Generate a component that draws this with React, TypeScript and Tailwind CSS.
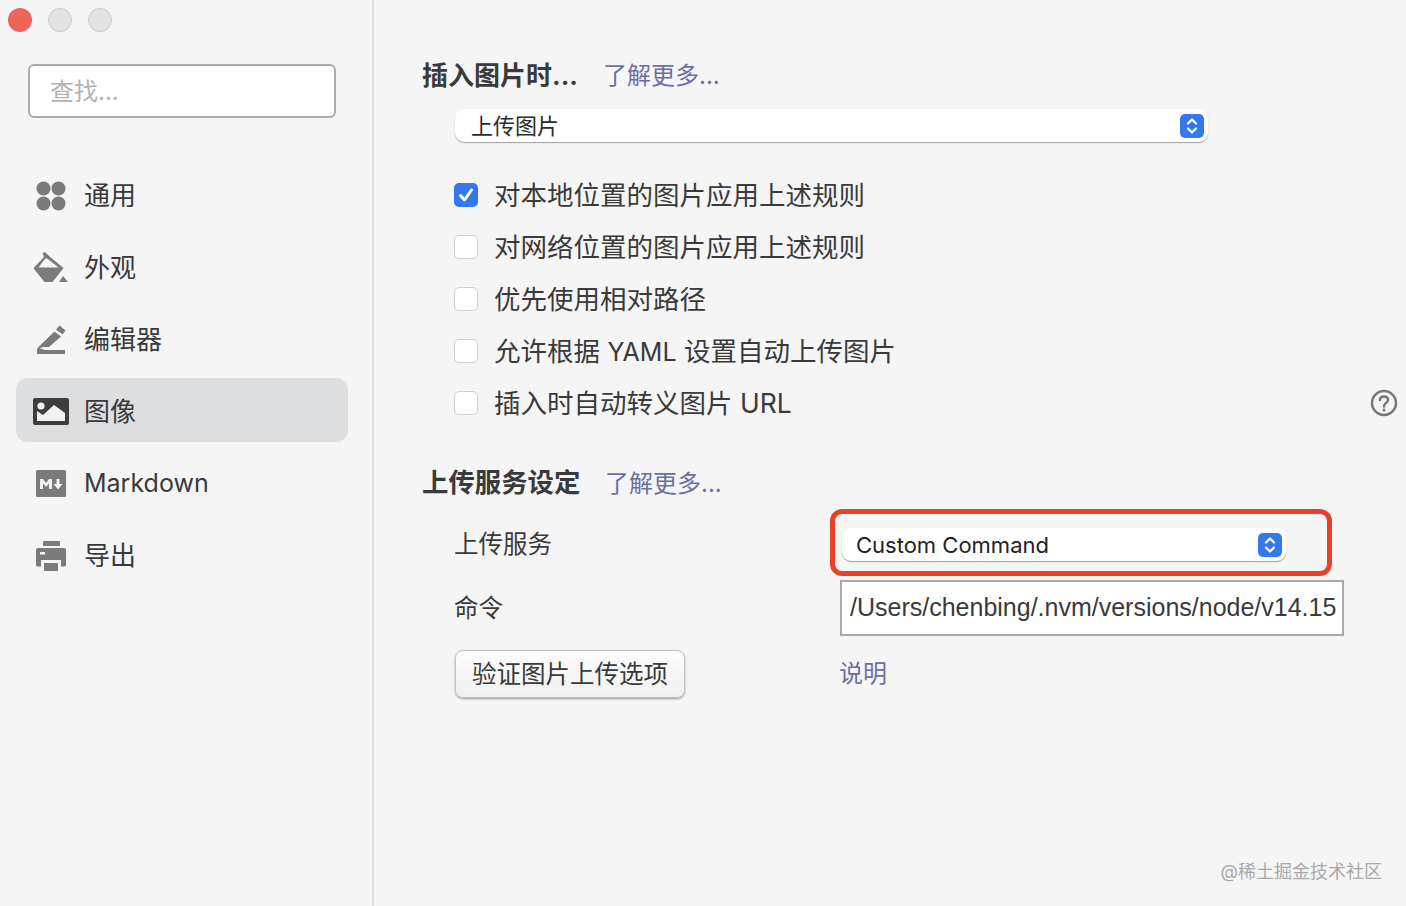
import type { ReactNode } from "react";

const fontStack = "font-['Inter','Noto_Sans_CJK_SC',sans-serif]";

function GeneralIcon() {
  return (
    <svg width="32" height="32" viewBox="0 0 32 32" fill="#7b7b7b">
      <circle cx="8.5" cy="8.5" r="7" />
      <circle cx="23.5" cy="8.5" r="7" />
      <circle cx="8.5" cy="23.5" r="7" />
      <circle cx="23.5" cy="23.5" r="7" />
    </svg>
  );
}

function BucketIcon() {
  return (
    <svg width="36" height="32" viewBox="0 0 36 32" fill="#7b7b7b">
      <path d="M9.500 1 L12 0 L16 4 L30.500 16 L19.500 30 H11.500 L1 17 Q0.500 16 1.500 15 L11 5 Z M11 8 L5.500 15.500 H25.500 L13.500 6 Z" fillRule="evenodd" />
      <path d="M30 24 L35 30 H26 Z" />
    </svg>
  );
}

function PencilIcon() {
  return (
    <svg width="32" height="32" viewBox="0 0 32 32" fill="#7b7b7b">
      <path d="M24.500 1.500 L30.500 6.500 L27.500 10.500 L21 5.500 Z" />
      <path d="M19.500 7.500 L26 12.500 L14 23 H8 L2.500 26 V24 Z" />
      <path d="M2 25 L9 25 L8 26 H30 V30 H2 Z" />
    </svg>
  );
}

function ImageIcon() {
  return (
    <svg width="36" height="28" viewBox="0 0 36 28">
      <rect x="0" y="0" width="36" height="27" rx="2" fill="#3d3d3d" />
      <circle cx="8" cy="8" r="3.600" fill="#f2f2f2" />
      <path d="M4 23 V13 L10 17 L21 7 L32 15 V23 Z" fill="#f2f2f2" />
    </svg>
  );
}

function MarkdownIcon() {
  return (
    <svg width="30" height="28" viewBox="0 0 30 28">
      <rect x="0" y="0" width="30" height="27" rx="1.500" fill="#7b7b7b" />
      <path d="M4 19 V9 H7 L10 13 L13 9 H16 V19 H13 V13.500 L10 17 L7 13.500 V19 Z" fill="#f2f2f2" />
      <path d="M20.500 9 H23.500 V14 H26.500 L22 19.500 L17.500 14 H20.500 Z" fill="#f2f2f2" />
    </svg>
  );
}

function PrinterIcon() {
  return (
    <svg width="30" height="30" viewBox="0 0 30 30" fill="#7b7b7b">
      <path d="M7 1 Q7 0 8 0 H23 Q24 0 24 1 V5 H7 Z" />
      <path d="M2 7 H28 Q30 7 30 9 V24 Q30 25.500 28 25.500 H25 V19 H5 V25.500 H2 Q0 25.500 0 24 V9 Q0 7 2 7 Z" />
      <rect x="8" y="22" width="14" height="8" />
      <rect x="4" y="11" width="5" height="2.500" fill="#f5f5f6" />
    </svg>
  );
}

function Stepper() {
  return (
    <span className="flex h-6 w-6 shrink-0 items-center justify-center rounded-[5px] bg-[#3478f0]">
      <svg width="14" height="20" viewBox="0 0 14 20" fill="none" stroke="#fff" strokeWidth="2.200" strokeLinecap="round" strokeLinejoin="round">
        <path d="M3 7.500 L7 3.500 L11 7.500" />
        <path d="M3 12.500 L7 16.500 L11 12.500" />
      </svg>
    </span>
  );
}

function SelectBox({ className, children }: { className: string; children: ReactNode }) {
  return (
    <div className={`flex items-center justify-between rounded-[9px] bg-white pr-1 shadow-[0_1px_1px_rgba(0,0,0,0.35)] ${className}`}>
      <span className="pt-[2px]">{children}</span>
      <Stepper />
    </div>
  );
}

function Checkbox({ checked }: { checked?: boolean }) {
  if (checked) {
    return (
      <span className="flex h-6 w-6 shrink-0 items-center justify-center rounded-[5px] bg-[#3478f0]">
        <svg width="18" height="18" viewBox="0 0 18 18" fill="none" stroke="#fff" strokeWidth="3" strokeLinecap="round" strokeLinejoin="round">
          <path d="M3.500 9.500 L7.500 14 L14.500 4" />
        </svg>
      </span>
    );
  }
  return <span className="h-6 w-6 shrink-0 rounded-[5px] border border-[#cfcfcf] bg-white" />;
}

const navItems = [
  { label: "通用", icon: <GeneralIcon /> },
  { label: "外观", icon: <BucketIcon /> },
  { label: "编辑器", icon: <PencilIcon /> },
  { label: "图像", icon: <ImageIcon />, active: true },
  { label: "Markdown", icon: <MarkdownIcon />, latin: true },
  { label: "导出", icon: <PrinterIcon /> },
];

const options: { label: ReactNode; key: string; checked?: boolean; help?: boolean }[] = [
  { key: "local", label: "对本地位置的图片应用上述规则", checked: true },
  { key: "net", label: "对网络位置的图片应用上述规则" },
  { key: "rel", label: "优先使用相对路径" },
  { key: "yaml", label: <>允许根据 <span className="text-[25px]">YAML</span> 设置自动上传图片</> },
  { key: "url", label: "插入时自动转义图片 URL", help: true },
];

export default function App() {
  return (
    <div className={`relative flex h-[906px] w-[1406px] overflow-hidden bg-[#f5f5f6] text-[#3a3a3a] ${fontStack}`}>
      <aside className="h-full w-[374px] shrink-0 border-r-2 border-[#e0e0e0]">
        <div className="flex gap-4 pl-2 pt-2">
          <span className="h-6 w-6 rounded-full bg-[#ec6559]" />
          <span className="h-6 w-6 rounded-full border border-[#c8c8c8] bg-[#e2e2e2]" />
          <span className="h-6 w-6 rounded-full border border-[#c8c8c8] bg-[#e2e2e2]" />
        </div>
        <div className="ml-7 mt-8 flex h-[54px] w-[308px] items-center rounded-md border-2 border-[#ababab] bg-white pl-5 pt-px text-2xl text-[#b2b2b2]">
          查找...
        </div>
        <nav className="mt-11 flex flex-col gap-2 px-4">
          {navItems.map((item) => (
            <div
              key={item.label}
              className={`flex h-16 w-[332px] items-center rounded-xl ${item.active ? "bg-[#dddee0]" : ""}`}
            >
              <span className="flex w-[68px] shrink-0 items-center justify-center pl-[2px] pt-1">{item.icon}</span>
              <span className={item.latin ? "pt-1 text-[25px]" : "pt-[2px] text-[26px]"}>{item.label}</span>
            </div>
          ))}
        </nav>
      </aside>

      <main className="flex-1 pr-2 pt-[57px]">
        <div className="ml-12 flex h-9 items-center">
          <span className="w-[181px] text-[26px] font-bold">插入图片时...</span>
          <span className="pt-[2px] text-2xl text-[#6c6f9e]">了解更多...</span>
        </div>
        <SelectBox className="ml-[81px] mt-4 h-[33px] w-[753px] pl-4 text-[22px] text-[#2c2c2c]">上传图片</SelectBox>

        <div className="ml-20 mt-[27px] flex flex-col">
          {options.map((o) => (
            <div key={o.key} className="flex h-[52px] items-center gap-4 text-[26.500px]">
              <Checkbox checked={o.checked} />
              <span className="pt-[2px]">{o.label}</span>
              {o.help && (
                <svg className="ml-auto" width="28" height="28" viewBox="0 0 28 28" fill="none" stroke="#777" strokeWidth="2.500">
                  <circle cx="14" cy="14" r="12" />
                  <path d="M10 11 Q10 7.500 14 7.500 Q18 7.500 18 11 Q18 13 15.500 14.500 Q14 15.500 14 17.500" strokeLinecap="round" />
                  <circle cx="14" cy="21" r="1.500" fill="#777" stroke="none" />
                </svg>
              )}
            </div>
          ))}
        </div>

        <div className="ml-12 mt-9 flex h-9 items-center">
          <span className="w-[183px] text-[26.400px] font-bold">上传服务设定</span>
          <span className="pt-px text-2xl text-[#6c6f9e]">了解更多...</span>
        </div>

        <div className="ml-20 mt-[27px] grid grid-cols-[386px_504px] text-[24.500px]">
          <div className="flex h-[33px] items-center">上传服务</div>
          <div className="relative ml-[2px] w-[444px]">
            <SelectBox className="h-[33px] pl-[14px] text-[22px] text-[#222]">Custom Command</SelectBox>
            <div className="absolute -left-3 -top-[19px] -right-[46px] -bottom-[15px] rounded-xl border-[5px] border-[#e8412a]" />
          </div>

          <div className="mt-[19px] flex h-14 items-center">命令</div>
          <div className="mt-[19px] flex h-14 items-center overflow-hidden whitespace-nowrap border-2 border-[#ababab] bg-white pl-2 font-['Liberation_Sans',sans-serif] text-[25px]">
            /Users/chenbing/.nvm/versions/node/v14.15
          </div>

          <div className="mt-[14px] h-12">
            <button className="ml-px flex h-12 w-[230px] items-center justify-center rounded-lg border border-[#c4c4c4] bg-gradient-to-b from-[#fdfdfd] to-[#f0f0f0] text-[24.500px] shadow-[0_1px_2px_rgba(0,0,0,0.4)]">
              验证图片上传选项
            </button>
          </div>
          <div className="mt-[14px] -ml-px flex h-12 items-center text-2xl text-[#6c6f9e]">说明</div>
        </div>
      </main>

      <div className="absolute bottom-5 right-6 text-lg text-[#a9a9a9]">@稀土掘金技术社区</div>
    </div>
  );
}
